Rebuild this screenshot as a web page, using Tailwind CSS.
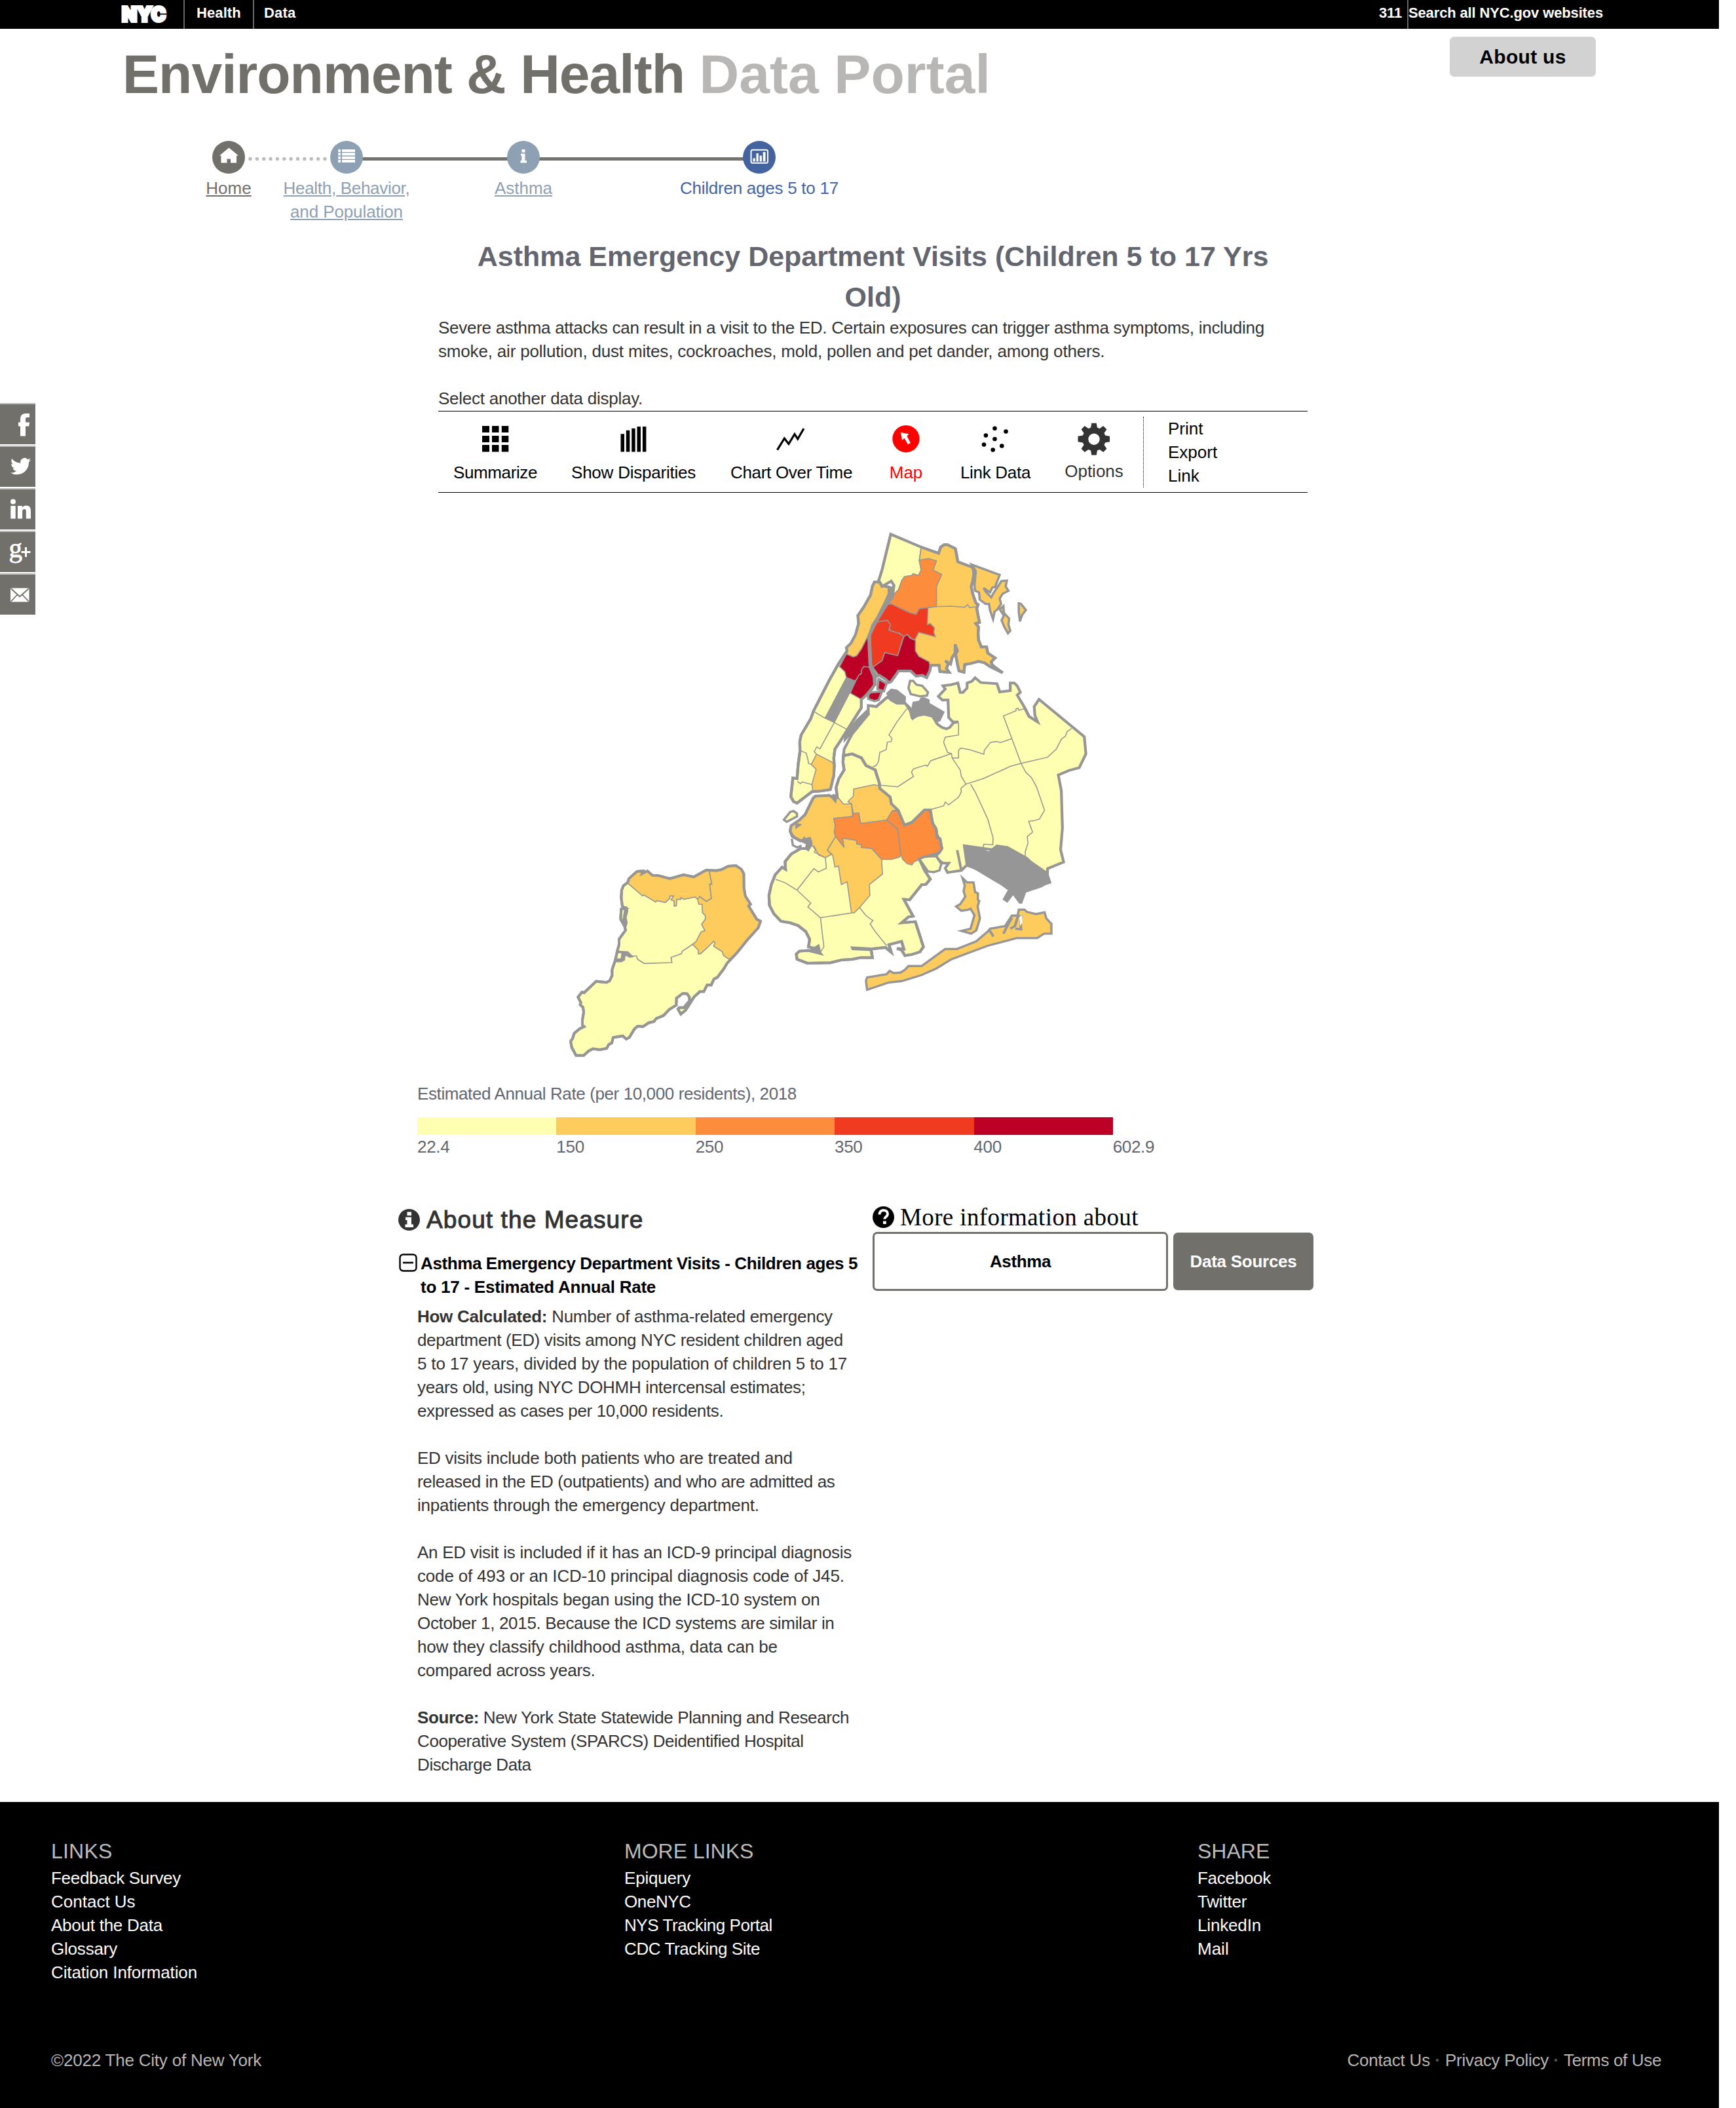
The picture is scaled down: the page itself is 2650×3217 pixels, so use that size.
<!DOCTYPE html>
<html lang="en">
<head>
<meta charset="utf-8">
<title>Environment &amp; Health Data Portal</title>
<script src="https://cdn.jsdelivr.net/npm/@tailwindcss/browser@4"></script>
</head>
<body class="relative w-[2650px] h-[3217px] overflow-x-hidden bg-white font-['Liberation_Sans',Arial,sans-serif] text-[26px] leading-[36px] text-[#333] whitespace-nowrap">

<!-- City-wide bar -->
<nav class="flex justify-between w-[2624px] h-[44px] bg-black text-white text-[22px] leading-[40px] font-bold">
  <div class="flex">
    <div class="w-[282px] pl-[178px] border-r-2 border-[#666]">
      <svg class="w-[84px] h-[44px]" viewBox="0 0 84 44"><text x="8" y="33" textLength="67" lengthAdjust="spacingAndGlyphs" font-family="Inter, 'Liberation Sans', sans-serif" font-weight="900" font-size="31" fill="#fff" stroke="#fff" stroke-width="4">NYC</text></svg>
    </div>
    <div class="w-[106px] pl-[18px] border-r-2 border-[#666] tracking-[0.1px]">Health</div>
    <div class="pl-[15px] tracking-[0.2px]">Data</div>
  </div>
  <div class="flex pr-[177px]">
    <div class="w-[45px] border-r-2 border-[#666] tracking-[-0.17px]">311</div>
    <div class="leading-[39px] tracking-[-0.14px]">Search all NYC.gov websites</div>
  </div>
</nav>

<!-- Masthead -->
<header class="flex justify-between items-start w-[2624px] h-[171px] pl-[187px] pr-[188px]">
  <h1 class="mt-[27px] text-[84px] leading-[84px] font-bold text-[#71706b] tracking-[-0.97px]">Environment &amp; Health <span class="text-[#b8b7b5] tracking-[0.1px]">Data Portal</span></h1>
  <a class="mt-[12px] flex items-center justify-center w-[223px] h-[61px] rounded-[7px] bg-[#d2d2d2] text-black text-[30px] font-bold tracking-[0.3px]">About us</a>
</header>

<!-- Breadcrumb -->
<div class="relative h-[145px] pl-[289px]">
  <div class="absolute left-[529px] top-[25px] w-[630px] h-[5px] bg-[#73726c]"></div>
  <svg class="absolute left-[378px] top-[24px] w-[124px] h-[7px]" viewBox="0 0 124 7"><line x1="4" y1="3.5" x2="121" y2="3.5" stroke="#bdbcba" stroke-width="5.4" stroke-linecap="round" stroke-dasharray="0 10.36"/></svg>
  <div class="relative flex text-center">
    <div class="w-[120px] flex flex-col items-center gap-[4px] text-[#71706b]">
      <svg class="w-[50px] h-[50px]" viewBox="0 0 50 50"><circle cx="25" cy="25" r="25" fill="#71706b"/><path d="M25.5 10.5 40 22.5h-3V33.5h-9V27.500h-5.500V33.500h-9V22.500h-2.500Z" fill="#fff"/></svg>
      <span class="underline">Home</span>
    </div>
    <div class="w-[240px] flex flex-col items-center gap-[4px] text-[#8da0b4]">
      <svg class="w-[50px] h-[50px]" viewBox="0 0 50 50"><circle cx="25" cy="25" r="25" fill="#8da0b4"/><path d="M12.300 13H16v4h-3.700zM18 13h20v4H18zM12.300 18.300H16v4h-3.700zM18 18.300h20v4H18zM12.300 23.700H16v4h-3.700zM18 23.700h20v4H18zM12.300 29H16v4h-3.700zM18 29h20v4H18z" fill="#fff"/></svg>
      <span class="underline"><span class="tracking-[-0.3px]">Health, Behavior,</span><br><span class="tracking-[-0.11px]">and Population</span></span>
    </div>
    <div class="w-[300px] flex flex-col items-center gap-[4px] text-[#8da0b4]">
      <svg class="w-[50px] h-[50px]" viewBox="0 0 50 50"><circle cx="25" cy="25" r="25" fill="#8da0b4"/><path d="M22.500 13h5v4.500h-5zM21 19.500h6.500v10.500h2.500v3.500H20.500V30h2v-7.500H21z" fill="#fff"/></svg>
      <span class="underline">Asthma</span>
    </div>
    <div class="w-[420px] flex flex-col items-center gap-[4px] text-[#4464a0]">
      <svg class="w-[50px] h-[50px]" viewBox="0 0 50 50"><circle cx="25" cy="25" r="25" fill="#4464a0"/><rect x="12.500" y="13.700" width="25.500" height="20" rx="2.500" fill="none" stroke="#fff" stroke-width="2"/><path d="M15.500 26.500h3.300v5h-3.300zM20.500 19h3.300v12.500h-3.300zM25.600 22.500h3.300v9h-3.300zM30.700 17h3.800v14.500h-3.800z" fill="#fff"/></svg>
      <span class="tracking-[-0.25px]">Children ages 5 to 17</span>
    </div>
  </div>
</div>

<!-- Share rail -->
<div class="absolute left-0 top-[615px] flex flex-col gap-[2px]">
  <div class="w-[54px] h-[63px] bg-[#71706b] border-t-2 border-[#bbb]"><svg class="w-[54px] h-[61px]" viewBox="0 2 54 61"><path d="M31 50.500V35.500h-3v-6h3v-4c0-6 2.500-9.500 8-9.500h6v6h-3.500c-2 0-2.500 1-2.500 2.800v4.700h6l-.7 6H39v15z" fill="#fff"/></svg></div>
  <div class="w-[54px] h-[63px] bg-[#71706b] border-t-2 border-[#bbb]"><svg class="w-[54px] h-[61px]" viewBox="0 2 54 61"><path transform="translate(16 16) scale(1.300)" d="M23.950 4.570a10 10 0 0 1-2.820.77 4.960 4.960 0 0 0 2.160-2.720c-.95.55-2 .95-3.130 1.180a4.920 4.920 0 0 0-8.380 4.480A13.930 13.930 0 0 1 1.640 3.160a4.920 4.920 0 0 0 1.520 6.570 4.900 4.900 0 0 1-2.230-.62v.06a4.920 4.920 0 0 0 3.950 4.830 5 5 0 0 1-2.210.08 4.940 4.940 0 0 0 4.600 3.420A9.870 9.870 0 0 1 0 19.540a13.990 13.990 0 0 0 7.550 2.210c9.050 0 14-7.500 14-13.980 0-.21 0-.42-.02-.63a9.940 9.940 0 0 0 2.420-2.570z" fill="#fff"/></svg></div>
  <div class="w-[54px] h-[63px] bg-[#71706b] border-t-2 border-[#bbb]"><svg class="w-[54px] h-[61px]" viewBox="0 2 54 61"><circle cx="20" cy="20.500" r="4" fill="#fff"/><path d="M16.300 27h7.400V46.500h-7.400zM27 27h7v2.700c1.300-2 3.500-3.200 6.300-3.200 5 0 6.700 3.500 6.700 8.500V46.500h-7.200V36c0-2.500-.6-4-2.700-4s-3 1.500-3 4V46.500H27z" fill="#fff"/></svg></div>
  <div class="w-[54px] h-[63px] bg-[#71706b] border-t-2 border-[#bbb]"><svg class="w-[54px] h-[61px]" viewBox="0 2 54 61"><text x="13.500" y="39.500" font-family="'Liberation Serif', serif" font-size="41" fill="#fff" stroke="#fff" stroke-width=".8">g</text><path d="M38 25h3v6h5.500v3H41v6h-3V34h-5.500v-3H38z" fill="#fff"/></svg></div>
  <div class="w-[54px] h-[63px] bg-[#71706b] border-t-2 border-[#bbb]"><svg class="w-[54px] h-[61px]" viewBox="0 2 54 61"><rect x="16" y="22.500" width="28.500" height="21" rx="2" fill="#fff"/><path d="M17 23.500l13.200 12L43.500 23.500M17 42.500l9.500-10M43.500 42.500l-9.500-10" fill="none" stroke="#71706b" stroke-width="1.800"/></svg></div>
</div>

<main>
  <!-- Measure title and intro -->
  <section class="w-[1327px] ml-[669px]">
    <h2 class="h-[122px] text-[43px] leading-[62px] font-bold text-center text-[#63666f]">Asthma Emergency Department Visits (Children 5 to 17 Yrs<br>Old)</h2>
    <p><span class="tracking-[-0.28px]">Severe asthma attacks can result in a visit to the ED. Certain exposures can trigger asthma symptoms, including</span><br><span class="tracking-[-0.18px]">smoke, air pollution, dust mites, cockroaches, mold, pollen and pet dander, among others.</span></p>
    <p class="mt-[36px] tracking-[-0.25px]">Select another data display.</p>
  </section>

  <!-- Display switcher -->
  <section class="flex w-[1327px] h-[125px] ml-[669px] mt-px pl-[24px] border-y border-black text-black">
    <a class="w-[126px] pt-[17px] flex flex-col items-center gap-[8px]">
      <svg class="w-[50px] h-[50px]" viewBox="0 0 50 50"><path d="M5 5h11v10H5zM20 5h10.500v10H20zM34.800 5h10.500v10H34.800zM5 20h11v10H5zM20 20h10.500v10H20zM34.800 20h10.500v10H34.800zM5 34h11v10.500H5zM20 34h10.500v10.500H20zM34.800 34h10.500v10.500H34.800z"/></svg>
      <span class="tracking-[-0.39px]">Summarize</span>
    </a>
    <a class="w-[188px] ml-[54px] pt-[17px] flex flex-col items-center gap-[8px]">
      <svg class="w-[50px] h-[50px]" viewBox="0 0 50 50"><path d="M5.500 17.300H11V44.500H5.500zM13.800 11.700h5.500v32.800h-5.500zM22.200 8.700h5.500v35.800h-5.500zM30.500 6H36v38.500h-5.500zM38.900 6h5.500v38.500h-5.500z"/></svg>
      <span class="tracking-[-0.23px]">Show Disparities</span>
    </a>
    <a class="w-[184px] ml-[55px] pt-[17px] flex flex-col items-center gap-[8px]">
      <svg class="w-[50px] h-[50px]" viewBox="0 0 50 50"><path d="M3.500 41.700 14.400 24l6.500 8.500L30 17.500l4.700 7.500L44 9" fill="none" stroke="#000" stroke-width="3.200"/></svg>
      <span class="tracking-[-0.31px]">Chart Over Time</span>
    </a>
    <a class="w-[50px] ml-[58px] pt-[17px] flex flex-col items-center gap-[8px] text-[#f00]">
      <svg class="w-[50px] h-[50px]" viewBox="0 0 50 50"><circle cx="25" cy="24.700" r="20.700" fill="#f00"/><path d="M17 15 29.300 17.300 26.500 20.500 31.800 31 28 33.300 22.500 23.800 19.200 27Z" fill="#fff"/></svg>
      <span>Map</span>
    </a>
    <a class="w-[105px] ml-[59px] pt-[17px] flex flex-col items-center gap-[8px]">
      <svg class="w-[50px] h-[50px]" viewBox="0 0 50 50"><circle cx="23.500" cy="8.700" r="3.300"/><circle cx="40.500" cy="13.500" r="3.300"/><circle cx="9.900" cy="19.500" r="3.300"/><circle cx="23.500" cy="25" r="3.300"/><circle cx="7" cy="33.500" r="3.300"/><circle cx="34.300" cy="35.500" r="3.300"/><circle cx="20.700" cy="41.500" r="3.300"/></svg>
      <span class="tracking-[-0.3px]">Link Data</span>
    </a>
    <a class="w-[88px] ml-[54px] pt-[17px] flex flex-col items-center gap-[6px] text-[#333]">
      <svg class="w-[50px] h-[50px]" viewBox="0 0 50 50"><path fill="#333" fill-rule="evenodd" d="M21.300.8h7.400l1.200 6.600 3.700 1.600 5.600-3.900 5.200 5.200-3.900 5.600 1.600 3.700 6.900 1.200v8.400l-6.900 1.200-1.600 3.700 3.900 5.600-5.200 5.200-5.600-3.900-3.700 1.600-1.200 6.900h-7.400l-1.200-6.900-3.700-1.600-5.600 3.900-5.200-5.200 3.900-5.600-1.600-3.700L.5 29.200v-8.400l7.400-1.200 1.600-3.700-3.900-5.600 5.200-5.200L16.400 9l3.700-1.600zM25 16.500a8.700 8.700 0 1 0 0 17.400a8.700 8.700 0 1 0 0-17.400z"/></svg>
      <span>Options</span>
    </a>
    <div class="ml-[31px] mt-[8px] h-[108px] border-l border-dotted border-black"></div>
    <div class="ml-[37px] pt-[8px] flex flex-col items-start"><span>Print</span><span>Export</span><span>Link</span></div>
  </section>

  <!-- Choropleth -->
  <svg class="block ml-[840px] w-[860px] h-[899px]" viewBox="840 752 860 899" stroke-linejoin="miter">
    <g transform="translate(1150 780) scale(.3508 .3333)" stroke="#969696" stroke-width="4.500" fill="#ffffb2">
      <!-- borough bodies -->
      <g stroke-width="12">
        <g fill="#fecc5c"><path id="bx" d="M598 106 730 165 806 193 815 165 830 154H845L879 172 890 232 955 258 960 285 955 320 948 345 955 380 968 420 978 428 972 445 978 478 984 510 968 515 980 530 978 560 980 590 992 622H1015L1020 650 1052 672 1035 690 1040 706 1085 740 1030 712 1005 694 980 688 945 698 920 702 916 738 895 732 888 700 880 655 888 640 878 610V650L865 670 858 700 835 685 848 700 840 720 852 738 812 735 808 706H772L768 730 754 762 735 752 708 755 685 732H632L600 780 590 785 575 770 548 752 535 755 512 715 505 575 512 545 540 495 570 430 590 415 605 395 612 340 600 320 560 345 545 320 560 270Z"/></g>
        <path id="mn" d="M527 325H550L560 342 590 348V380L575 415 545 480 520 520 505 570 503 620 508 715 525 760 527 795 515 815 495 840 470 862V900L440 950 410 1000 380 1050 355 1090 350 1130 352 1165 350 1210 335 1275 290 1282 255 1285 190 1337 175 1330 163 1308 172 1222 190 1225 195 1160 203 1100 202 1055 208 1025 250 950 262 915 330 775 370 700 408 640 405 625 425 605 445 565 458 515 455 478 480 440 510 385 518 345Z"/>
        <path id="qn" d="M500 890 535 895 585 850 600 865 625 880H660L680 900 690 945 720 935 745 930 780 940 800 975 820 990 840 997 855 990 870 970 893 965 868 965 850 945 847 865H822L805 848 835 815 825 800 860 795 890 787 900 830H912L930 810V787L950 780 965 763 990 785 1060 790 1072 828 1118 822V787H1135L1148 800 1162 830 1148 842 1178 895 1200 940 1237 965 1225 935 1222 895 1243 862 1440 1033 1447 1112 1418 1175 1375 1187 1327 1208 1340 1280 1345 1450 1337 1550 1350 1607 1280 1637V1685L1190 1590 1105 1540 1060 1533 1040 1550 918 1532 930 1620 905 1645 845 1655 835 1635 850 1612H825L810 1600 795 1580 820 1545 812 1500 800 1495 795 1455 780 1430 768 1370 745 1368 690 1430 657 1438 635 1390 600 1340 595 1310 550 1270 545 1245 530 1185 490 1165 470 1130 430 1112 392 1120 395 1090 430 1020 500 930Z"/>
        <path id="bk" d="M392 1120 430 1112 470 1130 490 1165 530 1185 548 1245 550 1270 595 1310 600 1340 630 1370 657 1438 690 1425 745 1368H770L780 1430 795 1455 800 1495 812 1500 820 1545 808 1565 750 1582 722 1592 730 1610 745 1645 770 1685 750 1710H733L680 1780 655 1778 695 1855 675 1858 645 1885 705 1880 740 1995 725 2018 690 2030 660 2035 645 2010 625 2003 655 2005 645 1970 590 1985 600 2020 575 1998 512 2005 518 2045H465L430 2052 385 2055 335 2068 235 2070 190 2052 187 2028 200 2015 240 2012 290 2025 270 2003 240 1995 245 1960 228 1925 195 1898 160 1885 120 1878 90 1845 70 1805 68 1760 78 1710 95 1665 125 1630 140 1640 138 1605 165 1570 205 1545 240 1545 250 1530 240 1500 205 1510 170 1490 160 1465 165 1440 200 1415 225 1390 260 1315 270 1305 330 1302 360 1320 345 1300 365 1310 360 1265 372 1225 395 1185 390 1150Z"/>
      </g>
      <!-- Bronx neighbourhoods -->
      <path d="M598 106 730 165 722 225 730 270 718 295 695 287 690 295 658 300 645 320 632 360 612 380 600 410 605 395 612 340 600 320 560 345 545 320 560 270Z"/>
      <path fill="none" d="M760 442 797 437 860 435 920 440 933 428 940 442 968 437M730 170 722 225"/>
      <path fill="#fd8d3c" d="M722 225 762 217 797 228 782 270 820 290 797 345V437L760 442 722 447 708 473 680 465 600 425 590 418 612 380 632 360 645 320 658 300 690 295 695 287 718 295 730 270Z"/>
      <path fill="#f03b20" d="M600 425 680 465 708 473 722 447 760 442 757 520 770 515 788 535 785 555 792 575 720 555 702 590 685 580 670 565 655 575 638 560 595 547 590 520 583 500 540 508 570 430Z"/>
      <path fill="#f03b20" d="M535 508 583 500 597 520 590 545 640 562 655 575 645 600 628 662 572 648 560 685 520 715 510 690V570Z"/>
      <path fill="#bd0026" d="M655 575 670 565 682 582 705 592V640L720 665 765 690 770 720 754 762 735 752 708 755 685 732H632L600 780 585 780 545 750 520 715 560 685 572 648 628 662Z"/>
      <!-- Manhattan neighbourhoods -->
      <path fill="#fecc5c" d="M527 325H550L560 342 590 348V380L545 470 500 570 487 605 470 632 450 662 435 668 408 655 405 625 425 605 445 565 458 515 455 478 480 440 510 385 518 345Z"/>
      <path fill="#bd0026" d="M497 575 503 630 508 715 480 712 470 740 458 755 443 778 405 762 398 735 375 712 405 655 435 668 450 662 470 632Z"/>
      <path fill="#bd0026" d="M508 715 525 760 525 795 470 862 422 833 445 778 460 750 470 745V730L480 712Z"/>
      <path fill="#fecc5c" d="M275 1113 340 1148 355 1165 350 1215 332 1272 290 1280H258L255 1250 273 1182 252 1160Z"/>
      <path fill="#969696" d="M405 762 445 780 352 968 312 948Z"/>
      <path fill="none" d="M262 915 275 925 312 948M352 968 405 998M352 968 290 1088 275 1080 265 1102 275 1113M205 1097 230 1108 238 1140 240 1155 252 1160M192 1238 205 1248 212 1240 255 1252"/>
      <!-- Queens community lines -->
      <path fill="none" d="M668 905 625 965 590 1025 603 1040 600 1055 583 1058 578 1092 550 1105 545 1145 535 1165 520 1170M550 1255 628 1262 697 1215 688 1195 697 1180 750 1163 757 1168 772 1143 862 1110M893 970V1025L835 1035 828 1058 845 1105 862 1110 865 1130H893V1095L903 1085 940 1092 1003 1113 1005 1095 1033 1058 1060 1055 1075 1060 1125 1042M1178 905 1155 912 1153 903 1143 905V914L1088 938 1125 1042 1165 1155 1185 1195 1210 1220 1232 1262 1267 1370 1245 1410 1220 1418 1198 1420 1215 1470 1192 1490 1195 1520 1183 1560V1590M865 1130 900 1185 905 1215 925 1250 1000 1225 1120 1168 1165 1155 1280 1127 1318 1090 1340 1045 1358 1030 1365 1010 1385 995M925 1250 903 1270 905 1285 893 1310 850 1345 835 1332 828 1350 775 1365M945 1250 965 1285 1020 1410 1043 1495 1042 1528 1003 1525 998 1545"/>
      <path fill="none" stroke-width="11" d="M887 1552 905 1645"/>
      <!-- Brooklyn neighbourhoods -->
      <path fill="#fecc5c" d="M260 1315 270 1305 330 1302 355 1320 368 1310 392 1342 427 1340 432 1398 350 1407 357 1445 352 1470 358 1490 322 1552 340 1572 313 1587 285 1575 270 1550 255 1530 240 1495 215 1510 180 1490 160 1465 165 1440 200 1415 225 1390Z"/>
      <path fill="#fecc5c" d="M437 1272 525 1253 548 1258 555 1275 595 1312 600 1340 630 1370 605 1372 580 1415 467 1430 458 1382 435 1385 427 1340 412 1330 435 1305Z"/>
      <path fill="#fd8d3c" d="M350 1407 432 1398 435 1385 458 1382 467 1430 580 1415 628 1455 643 1575 635 1585 600 1595H558L515 1545 470 1540V1528L450 1525 448 1508 388 1498 395 1540 358 1490 352 1465 357 1440Z"/>
      <path fill="#fd8d3c" d="M580 1415 605 1372 632 1375 657 1438 690 1425 745 1368 770 1370 780 1430 812 1500 820 1545 808 1565 750 1582 722 1592 745 1635 735 1620 718 1597 700 1605 690 1620 670 1615 650 1595 643 1575 628 1455Z"/>
      <path fill="#fecc5c" d="M358 1490 395 1540 388 1498 448 1508 450 1525 470 1528V1540L515 1545 558 1595 562 1662 505 1710 507 1760 462 1815 438 1840H427L408 1697 383 1710 370 1625 355 1630 345 1575 322 1552Z"/>
      <path fill="none" d="M97 1686 135 1700 190 1735 250 1795 237 1812 292 1862 307 1995 290 2022M190 1735 263 1637 283 1652 318 1635 313 1587M313 1587 285 1572 265 1562 272 1548 262 1532M292 1862 427 1840M462 1815 490 1852 520 1875 508 1890 528 1922 580 1990"/>
      <!-- parks, airports and shoreline slivers -->
      <g fill="#969696">
        <path d="M580 835 600 815 625 820 662 850 660 880 625 883 600 865ZM660 885 690 905 695 875 722 870 730 855H745L765 865V880L830 920 812 960 800 965 775 935 750 930 720 935 692 955 685 925ZM495 910 505 930 395 1055 398 1025 450 955Z"/>
        <path d="M918 1532 960 1537 1000 1550 1025 1560 1060 1533 1105 1540 1190 1590 1280 1655 1295 1702 1268 1712 1255 1720 1185 1745 1168 1795H1158L1130 1755 1105 1790 1087 1778 1110 1735 1080 1712 965 1640 930 1625Z"/>
        <path d="M185 1430 208 1435 185 1452ZM425 1995 512 2000V2012L430 2008ZM208 1512 222 1492 228 1508 248 1495 256 1520 240 1556 225 1545 232 1525ZM330 1298 362 1312 358 1335ZM245 2010 285 1985 295 2030ZM1030 690 1085 740 1040 712Z"/>
      </g>
      <g fill="none" stroke-width="12"><use href="#bx"/><use href="#mn"/><use href="#bk"/><path d="M500 890 535 895 585 850M1178 895 1200 940 1237 965"/></g>
      <path fill="none" stroke-width="14" d="M505 560 507 640 509 715 530 762V800M600 345 590 410 540 495 508 560"/>
      <!-- islands -->
      <g stroke-width="10">
        <path fill="#bd0026" d="M545 768 580 790 568 825 540 815ZM510 830 560 826 545 865 528 870 500 860V840Z"/>
        <path fill="#fecc5c" d="M950 245 1072 292 1058 330 1052 348 1040 350 1030 372 1002 352 1010 368 1035 395 1045 375 1080 320 1103 318 1098 345 1110 365 1085 378 1072 400 1078 425 1062 450 1050 460 1043 495 1030 455 1025 425 1010 425 985 405 982 372 965 365 962 340 968 275Z"/>
        <path fill="#fecc5c" d="M1088 435 1090 465 1113 492 1110 520 1118 548 1108 560 1092 530 1080 500 1090 478 1072 450ZM1155 422 1165 425 1186 453 1170 475 1160 505 1155 460Z"/>
        <path d="M682 777H695L710 795 735 800 760 830 755 845 725 848 685 838 675 810ZM133 1413 160 1378 175 1373 190 1385V1398L145 1423ZM722 1592 750 1582 795 1580 818 1615 810 1645 785 1653 760 1650Z"/>
        <path fill="#fecc5c" d="M910 1680 930 1700H958L965 1745 977 1750V1780L983 1785 976 1810 986 1865 970 1920 948 1935 905 1922 945 1912 962 1850 945 1820 935 1825 905 1830 882 1810 900 1800 922 1765 915 1740 920 1715Z"/>
        <path fill="#fecc5c" d="M495 2135 580 2120 593 2105 610 2115 640 2113 660 2100 675 2083 732 2083 835 2005H885L970 1970 1020 1925 1030 1912 1095 1900 1125 1852H1150L1155 1825H1180L1190 1835 1230 1845 1267 1837 1275 1865 1297 1890V1935H1265L1235 1955H1145L1020 1990 860 2053 795 2095 730 2125 645 2152 590 2158 495 2192 490 2150Z"/>
      </g>
      <path fill="none" stroke-width="11" d="M1088 1935 1110 1890 1125 1862M1118 1912 1138 1900 1150 1860 1158 1850M1168 1850 1162 1880 1165 1915 1140 1912M1028 1920 1045 1948"/>
      <path fill="#fff" stroke="none" d="M1158 1858 1170 1850 1170 1885 1160 1900Z"/>
      <path fill="none" stroke-width="10" d="M167 1500 172 1530 190 1540 210 1532"/>
    </g>
    <!-- Staten Island -->
    <g transform="translate(840 1290) scale(.3333)" stroke="#969696" stroke-width="5" fill="#ffffb2">
      <path id="si" stroke-width="12" d="M360 153 397 120 425 118 420 130 445 118 468 138H492L548 153 610 135 657 145 715 113 758 116 783 112 815 96 850 93 875 110 886 130 887 195 893 232 917 270 908 278 945 338 963 348 952 378 905 430 855 492 810 540 795 565 765 605 750 612 737 640H718L703 670H685L658 695 620 755 598 773 585 750 590 743H612L638 712 637 695 627 680 607 678 578 700 577 732 545 752 518 780 485 793 475 807 450 813 425 830 400 828 385 842 362 880 348 887 332 873 288 880 282 905 268 912 258 930 227 936 195 932 175 942 153 962H118L98 925 93 897 102 885 110 860 135 840 155 830 147 822V800L153 765 150 742 137 730 140 720 127 695 145 672 155 675 210 623 258 628 272 620 283 597V570L298 525 308 480 315 455V430L345 388 340 370 322 338 325 292 345 288 330 280 325 240 327 205 335 185 355 170Z"/>
      <path fill="#fecc5c" d="M357 175 423 232 430 228 483 260 488 253 527 262 548 242V232H565L553 250 567 255V278H577L580 248H597L598 240 613 247 663 237 678 250 685 235 715 257 738 243 730 178H740L728 116 715 113 657 145 610 135 548 153 492 138H468L445 118 420 130 425 118 397 120 360 153Z"/>
      <path fill="#fecc5c" d="M728 116 740 178H730L738 243 715 257 685 235 675 247 680 270H695L697 308 710 322V338L693 362 708 390 690 397 668 440 652 453 678 480V497H688L720 468 748 440 755 445 748 462 768 475 788 487 793 505 820 522 855 492 905 430 952 378 963 348 945 338 908 278 917 270 893 232 887 195 886 130 875 110 850 93 815 96 783 112 758 116Z"/>
      <path fill="none" d="M652 453 635 465 605 485 600 497 553 513 557 537 430 541 400 522 395 507H370"/>
      <path fill="#969696" d="M308 485 355 488 378 510 365 513 342 502 340 525 326 533H302V520H325L328 492H308ZM338 282H350L355 300 347 330 352 355 346 375 332 345 340 300Z"/>
      <use href="#si" style="fill:none"/>
    </g>
  </svg>

  <!-- Legend -->
  <section class="ml-[637px] h-[187px] text-[#63666f]">
    <p class="tracking-[-0.39px]">Estimated Annual Rate (per 10,000 residents), 2018</p>
    <div class="mt-[18px] flex h-[27px] w-[1062px]"><i class="flex-1 bg-[#ffffb2]"></i><i class="flex-1 bg-[#fecc5c]"></i><i class="flex-1 bg-[#fd8d3c]"></i><i class="flex-1 bg-[#f03b20]"></i><i class="flex-1 bg-[#bd0026]"></i></div>
    <div class="flex w-[1274px] tracking-[-0.3px]"><span class="flex-1">22.4</span><span class="flex-1">150</span><span class="flex-1">250</span><span class="flex-1">350</span><span class="flex-1">400</span><span class="flex-1">602.9</span></div>
  </section>

  <!-- Details -->
  <section class="flex h-[912px] pl-[608px]">
    <div class="w-[724px] pt-[4px]">
      <h3 class="flex gap-[10px] text-[37px] leading-[40px]">
        <svg class="mt-[3px] w-[33px] h-[33px]" viewBox="0 0 33 33"><circle cx="16.500" cy="16.500" r="16.500" fill="#333"/><path d="M13.500 4.500h6.500v5.500h-6.500zM11 12.500h9v11h3v4.500H10.500v-4.500h3V17H11z" fill="#fff"/></svg>
        <span class="tracking-[1.1px] [-webkit-text-stroke:1px]">About the Measure</span>
      </h3>
      <div class="mt-[28px] flex gap-[5px] font-bold text-black">
        <svg class="mt-[3px] ml-px w-[28px] h-[28px]" viewBox="0 0 28 28"><rect x="1.500" y="1.500" width="25" height="25" rx="5" fill="none" stroke="#000" stroke-width="2.400"/><path d="M6 14h16" stroke="#000" stroke-width="2.600"/></svg>
        <p><span class="tracking-[-0.39px]">Asthma Emergency Department Visits - Children ages 5</span><br><span class="tracking-[-0.24px]">to 17 - Estimated Annual Rate</span></p>
      </div>
      <div class="mt-[9px] ml-[29px] flex flex-col gap-[36px]">
        <p><span class="tracking-[-0.27px]"><b>How Calculated:</b> Number of asthma-related emergency</span><br><span class="tracking-[-0.35px]">department (ED) visits among NYC resident children aged</span><br><span class="tracking-[-0.17px]">5 to 17 years, divided by the population of children 5 to 17</span><br><span class="tracking-[-0.32px]">years old, using NYC DOHMH intercensal estimates;</span><br><span class="tracking-[-0.35px]">expressed as cases per 10,000 residents.</span></p>
        <p><span class="tracking-[-0.25px]">ED visits include both patients who are treated and</span><br><span class="tracking-[-0.36px]">released in the ED (outpatients) and who are admitted as</span><br><span class="tracking-[-0.23px]">inpatients through the emergency department.</span></p>
        <p><span class="tracking-[-0.26px]">An ED visit is included if it has an ICD-9 principal diagnosis</span><br><span class="tracking-[-0.18px]">code of 493 or an ICD-10 principal diagnosis code of J45.</span><br><span class="tracking-[-0.25px]">New York hospitals began using the ICD-10 system on</span><br><span class="tracking-[-0.33px]">October 1, 2015. Because the ICD systems are similar in</span><br><span class="tracking-[-0.17px]">how they classify childhood asthma, data can be</span><br><span class="tracking-[-0.27px]">compared across years.</span></p>
        <p><span class="tracking-[-0.4px]"><b>Source:</b> New York State Statewide Planning and Research</span><br><span class="tracking-[-0.4px]">Cooperative System (SPARCS) Deidentified Hospital</span><br><span class="tracking-[-0.4px]">Discharge Data</span></p>
      </div>
    </div>
    <div>
      <h3 class="flex gap-[9px] text-[37px] leading-[40px] font-['Liberation_Serif','Times_New_Roman',serif] text-black">
        <svg class="mt-[3px] w-[33px] h-[33px]" viewBox="0 0 33 33"><circle cx="16.500" cy="16.500" r="16.500"/><path d="M10.500 12.500c0-4 2.500-6.500 6.300-6.500s6.200 2.200 6.200 5.500c0 4.500-4.700 4.500-4.700 8" fill="none" stroke="#fff" stroke-width="4"/><path d="M16 22.500h4.800v4.500H16z" fill="#fff"/></svg>
        <span class="tracking-[0.38px]">More information about</span>
      </h3>
      <div class="mt-[2px] flex items-center gap-[8px] font-bold">
        <a class="flex items-center justify-center w-[451px] h-[90px] border-[3px] border-[#71706b] rounded-[7px] text-black tracking-[-0.39px]">Asthma</a>
        <a class="flex items-center justify-center w-[214px] h-[88px] rounded-[7px] bg-[#71706b] text-white tracking-[-0.27px]">Data Sources</a>
      </div>
    </div>
  </section>
</main>

<footer class="w-[2624px] h-[467px] pt-[55px] bg-black text-white">
  <div class="grid grid-cols-[875px_875px_auto] h-[316px] pl-[78px]">
    <div><h4 class="mb-[3px] text-[32px] leading-[40px] text-[#bbb] tracking-[0.2px]">LINKS</h4><p><span class="tracking-[-0.29px]">Feedback Survey</span><br>Contact Us<br><span class="tracking-[-0.25px]">About the Data</span><br><span class="tracking-[-0.2px]">Glossary</span><br><span class="tracking-[-0.12px]">Citation Information</span></p></div>
    <div><h4 class="mb-[3px] text-[32px] leading-[40px] text-[#bbb]">MORE LINKS</h4><p><span class="tracking-[-0.2px]">Epiquery</span><br><span class="tracking-[-0.4px]">OneNYC</span><br><span class="tracking-[-0.43px]">NYS Tracking Portal</span><br><span class="tracking-[-0.4px]">CDC Tracking Site</span></p></div>
    <div><h4 class="mb-[3px] text-[32px] leading-[40px] text-[#bbb]">SHARE</h4><p><span class="tracking-[-0.27px]">Facebook</span><br><span class="tracking-[-0.2px]">Twitter</span><br><span class="tracking-[-0.16px]">LinkedIn</span><br>Mail</p></div>
  </div>
  <div class="flex justify-between mt-[5px] pl-[78px] pr-[88px] text-[#b8b7b5]">
    <span class="tracking-[-0.21px]">©2022 The City of New York</span>
    <div class="flex"><span class="tracking-[-0.2px]">Contact Us</span><span class="w-[23px] text-center font-bold text-[#555]">·</span><span class="tracking-[-0.27px]">Privacy Policy</span><span class="w-[23px] text-center font-bold text-[#555]">·</span><span class="tracking-[-0.35px]">Terms of Use</span></div>
  </div>
</footer>
</body>
</html>
